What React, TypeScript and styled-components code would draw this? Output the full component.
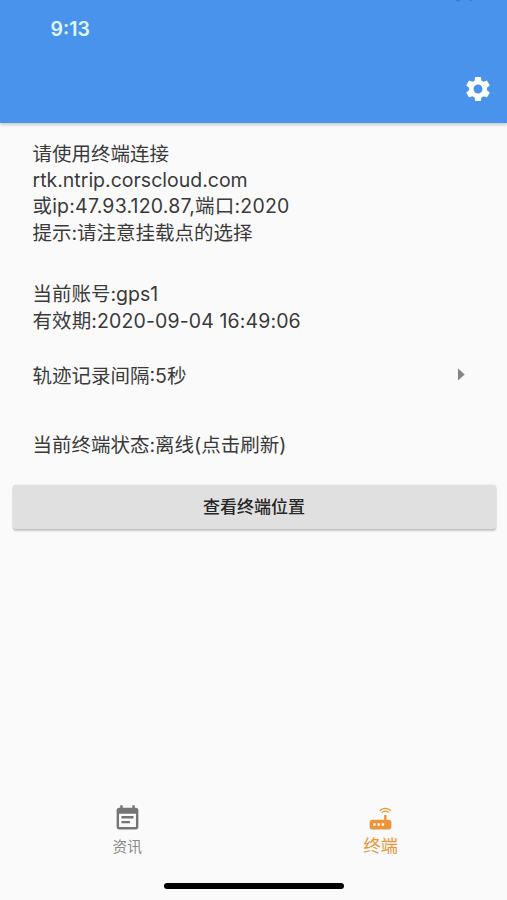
import React from "react";
import styled, { createGlobalStyle } from "styled-components";
import { MdSettings, MdEventNote, MdRouter } from "react-icons/md";

const GlobalStyle = createGlobalStyle`
  * { box-sizing: border-box; }
  body {
    margin: 0;
    background: #fafafa;
    font-family: Inter, "Noto Sans CJK SC", sans-serif;
    color: #3a3a3a;
  }
`;

const Screen = styled.div`
  width: 507px;
  height: 900px;
  display: flex;
  flex-direction: column;
  overflow: hidden;
`;

const AppBar = styled.header`
  flex: none;
  height: 123px;
  display: flex;
  flex-direction: column;
  background: #4a93ec;
  box-shadow: 0 2px 3px rgba(70, 90, 70, 0.28);
`;

const StatusBar = styled.div`
  position: relative;
  height: 54px;
  padding: 17px 0 0 50.5px;
  font-size: 19.5px;
  line-height: 24px;
  font-weight: 600;
  color: #e0f7ff;
`;

const NotchEdge = styled.svg`
  position: absolute;
  top: 0;
  left: 454px;
`;

const Toolbar = styled.div`
  flex: 1;
  display: flex;
  justify-content: flex-end;
  padding: 20px 14px 0 0;
`;

const IconButton = styled.button`
  width: 30px;
  height: 30px;
  padding: 0;
  border: 0;
  background: none;
  color: #fff;
  svg { display: block; }
`;

const Content = styled.main`
  flex: 1;
  padding: 18px 11px 0 12px;
`;

const Block = styled.section<{ $gap: number }>`
  display: flex;
  align-items: center;
  justify-content: space-between;
  padding: 0 31px 0 20.5px;
  margin-bottom: ${(p) => p.$gap}px;
`;

const Line = styled.div<{ $spacing?: number; $tall?: boolean }>`
  height: ${(p) => (p.$tall ? 27 : 26)}px;
  line-height: ${(p) => (p.$tall ? 28 : 26)}px;
  font-size: 19.5px;
  white-space: nowrap;
  letter-spacing: ${(p) => p.$spacing ?? 0}px;
`;

const Arrow = styled.svg`
  display: block;
  margin-bottom: 2px;
`;

const RaisedButton = styled.button`
  display: block;
  width: 483px;
  height: 44px;
  margin-left: 1px;
  padding: 0 1px 0 0;
  border: 0;
  border-radius: 3px;
  background: #e0e0e0;
  box-shadow: 0 2px 2px rgba(0, 0, 0, 0.2), 0 0 2px rgba(0, 0, 0, 0.14);
  font: 500 17px/44px Inter, "Noto Sans CJK SC", sans-serif;
  color: #262626;
`;

const TabBar = styled.nav`
  flex: none;
  height: 79px;
  display: grid;
  grid-template-columns: 1fr 1fr;
`;

const Tab = styled.div<{ $active?: boolean }>`
  display: flex;
  flex-direction: column;
  align-items: center;
  padding-left: 1px;
  color: ${(p) => (p.$active ? "#eb9438" : "#757575")};
  svg { display: block; }
`;

const TabLabel = styled.span<{ $active?: boolean }>`
  margin-top: ${(p) => (p.$active ? 0 : 1)}px;
  font-size: ${(p) => (p.$active ? 17.2 : 14.7)}px;
  line-height: 26px;
  color: ${(p) => (p.$active ? "#eb9438" : "#8a8a8a")};
`;

const HomeArea = styled.footer`
  flex: none;
  height: 17px;
  padding-left: 1px;
  display: flex;
  justify-content: center;
`;

const HomeIndicator = styled.div`
  width: 180px;
  height: 6px;
  border-radius: 3px;
  background: #000;
`;

export default function App() {
  return (
    <Screen>
      <GlobalStyle />
      <AppBar>
        <StatusBar>
          9:13
          <NotchEdge width="20" height="3" viewBox="0 0 20 3">
            <path d="M1 0h6l-2 1.4H3zM15 0h4l-1 1h-2z" fill="#3f7fc9" />
          </NotchEdge>
        </StatusBar>
        <Toolbar>
          <IconButton aria-label="设置"><MdSettings size={30} /></IconButton>
        </Toolbar>
      </AppBar>
      <Content>
        <Block $gap={35}>
          <div>
            <Line>请使用终端连接</Line>
            <Line>rtk.ntrip.corscloud.com</Line>
            <Line $spacing={0.2}>或ip:47.93.120.87,端口:2020</Line>
            <Line $tall>提示:请注意挂载点的选择</Line>
          </div>
        </Block>
        <Block $gap={28}>
          <div>
            <Line>当前账号:gps1</Line>
            <Line $tall $spacing={0.12}>有效期:2020-09-04 16:49:06</Line>
          </div>
        </Block>
        <Block $gap={42}>
          <Line $tall>轨迹记录间隔:5秒</Line>
          <Arrow width="7" height="13" viewBox="0 0 7 13">
            <path d="M0 0.5v12l6.7-6z" fill="#858585" />
          </Arrow>
        </Block>
        <Block $gap={27}>
          <Line $tall>当前终端状态:离线(点击刷新)</Line>
        </Block>
        <RaisedButton>查看终端位置</RaisedButton>
      </Content>
      <TabBar>
        <Tab>
          <MdEventNote size={29} />
          <TabLabel>资讯</TabLabel>
        </Tab>
        <Tab $active>
          <MdRouter size={29} />
          <TabLabel $active>终端</TabLabel>
        </Tab>
      </TabBar>
      <HomeArea>
        <HomeIndicator />
      </HomeArea>
    </Screen>
  );
}
